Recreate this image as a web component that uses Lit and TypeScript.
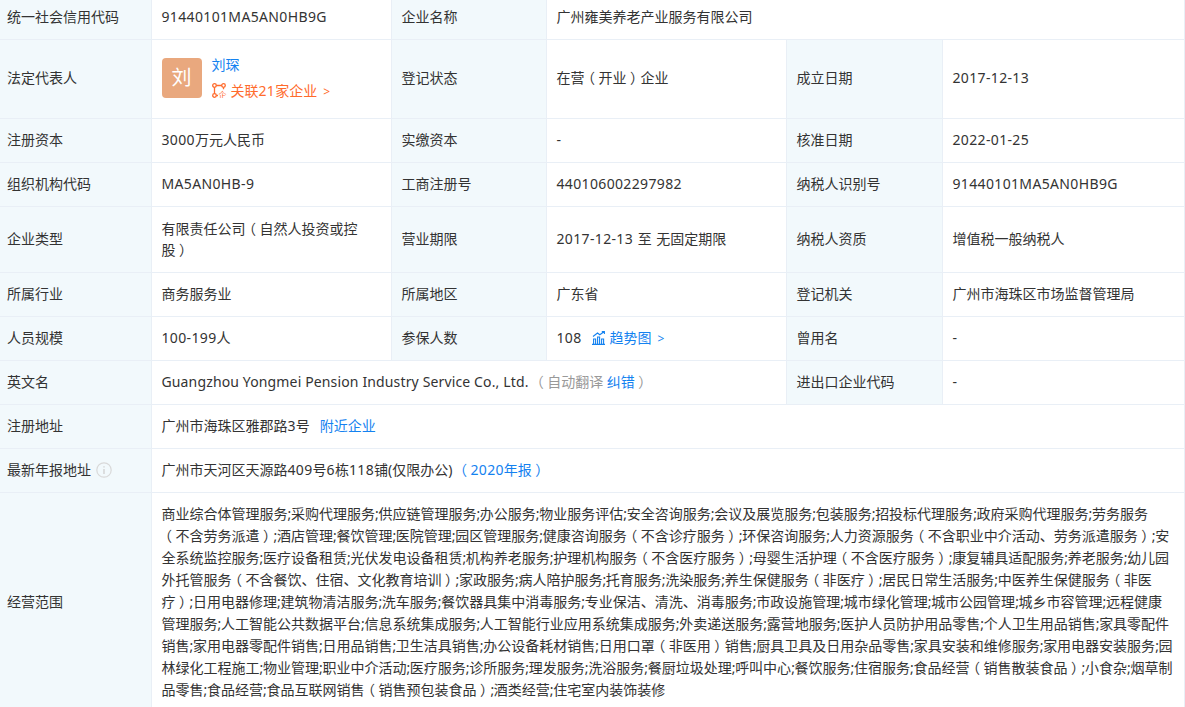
import { LitElement, html, css } from "lit";
import { customElement } from "lit/decorators.js";

const SCOPE = "商业综合体管理服务;采购代理服务;供应链管理服务;办公服务;物业服务评估;安全咨询服务;会议及展览服务;包装服务;招投标代理服务;政府采购代理服务;劳务服务（不含劳务派遣）;酒店管理;餐饮管理;医院管理;园区管理服务;健康咨询服务（不含诊疗服务）;环保咨询服务;人力资源服务（不含职业中介活动、劳务派遣服务）;安全系统监控服务;医疗设备租赁;光伏发电设备租赁;机构养老服务;护理机构服务（不含医疗服务）;母婴生活护理（不含医疗服务）;康复辅具适配服务;养老服务;幼儿园外托管服务（不含餐饮、住宿、文化教育培训）;家政服务;病人陪护服务;托育服务;洗染服务;养生保健服务（非医疗）;居民日常生活服务;中医养生保健服务（非医疗）;日用电器修理;建筑物清洁服务;洗车服务;餐饮器具集中消毒服务;专业保洁、清洗、消毒服务;市政设施管理;城市绿化管理;城市公园管理;城乡市容管理;远程健康管理服务;人工智能公共数据平台;信息系统集成服务;人工智能行业应用系统集成服务;外卖递送服务;露营地服务;医护人员防护用品零售;个人卫生用品销售;家具零配件销售;家用电器零配件销售;日用品销售;卫生洁具销售;办公设备耗材销售;日用口罩（非医用）销售;厨具卫具及日用杂品零售;家具安装和维修服务;家用电器安装服务;园林绿化工程施工;物业管理;职业中介活动;医疗服务;诊所服务;理发服务;洗浴服务;餐厨垃圾处理;呼叫中心;餐饮服务;住宿服务;食品经营（销售散装食品）;小食杂;烟草制品零售;食品经营;食品互联网销售（销售预包装食品）;酒类经营;住宅室内装饰装修";

const isLatin = (s: string) => /^[A-Za-z0-9-]+$/.test(s);
const run = (s: string) => (isLatin(s) ? html`<span class="n">${s}</span>` : s);

/* Wraps full-width parens (kept glued to their neighbour character), semicolons and Latin/digit runs. */
const t = (text: string) =>
  text.split(/(（.?|.?）|;|[A-Za-z0-9-]+)/).filter(Boolean).map((part) => {
    if (part === ";") return html`<span class="s">;</span>`;
    if (part.startsWith("（")) {
      return html`<span class="g"><span class="p">（</span>${run(part.slice(1))}</span>`;
    }
    if (part.endsWith("）")) {
      return html`<span class="g">${run(part.slice(0, -1))}<span class="p">）</span></span>`;
    }
    return run(part);
  });

@customElement("app-root")
export class AppRoot extends LitElement {
  static styles = css`
    :host {
      display: block;
      height: 707px;
      overflow: hidden;
      background: #fff;
      font-family: "Noto Sans", "Noto Sans CJK SC", sans-serif;
      font-size: 14px;
      color: #333;
    }
    table {
      width: 1184px;
      margin-top: -5px;
      border-collapse: collapse;
      table-layout: fixed;
      text-spacing-trim: space-all;
    }
    .c1 { width: 151px; }
    .c2 { width: 240px; }
    .c3 { width: 155px; }
    .c4 { width: 240px; }
    .c5 { width: 156px; }
    .c6 { width: 242px; }
    td {
      border: 1px solid #e9eff6;
      padding: 10px 10px 12px;
      line-height: 21px;
      vertical-align: middle;
      word-break: break-all;
    }
    td.k { background: #f2f9fc; }
    tr > td:first-child { border-left: 0; padding-left: 7px; }
    .h44 { height: 21px; }
    .legal-row td { padding-bottom: 14px; }
    .legal { height: 54px; }
    .type { height: 43px; }
    .scope { line-height: 22px; padding: 10px 8px 10px 10px; }
    .n { letter-spacing: 0.35px; }
    .s { letter-spacing: -0.3px; }
    .en { letter-spacing: 0.14px; margin-right: 1px; }
    .wide { word-spacing: 1px; }
    .g { white-space: nowrap; }
    .p {
      font-feature-settings: "halt";
      padding: 0 3.5px;
    }
    a { color: #1482f0; }
    .grey { color: #999; }
    .person { display: flex; align-items: center; gap: 10px; margin-top: 1px; }
    .avatar {
      width: 40px; height: 40px; border-radius: 4px;
      background: #e9a87e; color: #fff; font-size: 20px;
      display: flex; align-items: center; justify-content: center;
    }
    .person-info { display: flex; flex-direction: column; gap: 5px; }
    .rel { color: #ff6b2c; display: flex; align-items: center; gap: 4px; }
    .trend { vertical-align: -2px; margin: 0 5px 0 10px; }
    .info { vertical-align: -3px; margin-left: 5px; }
    .arrow { margin-left: 6px; font-size: 12px; line-height: 0; }
    .near { margin-left: 10px; }
    .year { margin-left: 4px; }
    .mini { font-size: 8px; fill: #ff6b2c; stroke: none; }
  `;

  render() {
    return html`
      <table>
        <colgroup>
          <col class="c1" /><col class="c2" /><col class="c3" />
          <col class="c4" /><col class="c5" /><col class="c6" />
        </colgroup>
        <tr>
          <td class="k h44">统一社会信用代码</td>
          <td>${t("91440101MA5AN0HB9G")}</td>
          <td class="k">企业名称</td>
          <td colspan="3">广州雍美养老产业服务有限公司</td>
        </tr>
        <tr class="legal-row">
          <td class="k legal">法定代表人</td>
          <td>
            <div class="person">
              <div class="avatar">刘</div>
              <div class="person-info">
                <a>刘琛</a>
                <div class="rel">
                  <svg width="15" height="15" viewBox="0 0 15 15" fill="none" stroke="#ff6b2c" stroke-width="1.3">
                    <circle cx="2.5" cy="2.5" r="1.8" /><circle cx="11.5" cy="2.5" r="1.8" /><circle cx="2.5" cy="12.5" r="1.8" />
                    <path d="M4.3 2.5h5.4M2.5 4.3v6.4M11.5 4.3v2M4.3 12.5h1.7" />
                    <text class="mini" x="6.5" y="14.5">企</text>
                  </svg>
                  <span>关联${t("21")}家企业<span class="arrow">&gt;</span></span>
                </div>
              </div>
            </div>
          </td>
          <td class="k">登记状态</td>
          <td>${t("在营（开业）企业")}</td>
          <td class="k">成立日期</td>
          <td>${t("2017-12-13")}</td>
        </tr>
        <tr>
          <td class="k h44">注册资本</td><td>${t("3000万元人民币")}</td>
          <td class="k">实缴资本</td><td>-</td>
          <td class="k">核准日期</td><td>${t("2022-01-25")}</td>
        </tr>
        <tr>
          <td class="k h44">组织机构代码</td><td>${t("MA5AN0HB-9")}</td>
          <td class="k">工商注册号</td><td>${t("440106002297982")}</td>
          <td class="k">纳税人识别号</td><td>${t("91440101MA5AN0HB9G")}</td>
        </tr>
        <tr>
          <td class="k type">企业类型</td><td>${t("有限责任公司（自然人投资或控股）")}</td>
          <td class="k">营业期限</td><td class="wide">${t("2017-12-13")} 至 无固定期限</td>
          <td class="k">纳税人资质</td><td>增值税一般纳税人</td>
        </tr>
        <tr>
          <td class="k h44">所属行业</td><td>商务服务业</td>
          <td class="k">所属地区</td><td>广东省</td>
          <td class="k">登记机关</td><td>广州市海珠区市场监督管理局</td>
        </tr>
        <tr>
          <td class="k h44">人员规模</td><td>${t("100-199人")}</td>
          <td class="k">参保人数</td>
          <td>${t("108")}<svg class="trend" width="13" height="14" viewBox="0 0 13 14" fill="none" stroke="#1482f0" stroke-width="1.1">
              <path d="M0 13.4h13M1.6 13V8h2v5M5.6 13V6h2v7M9.6 13V8h2v5M1 5.5 5.5 2l2.3 1.8L12 .8M9.8.6h2.6V3" />
            </svg><a>趋势图<span class="arrow">&gt;</span></a></td>
          <td class="k">曾用名</td><td>-</td>
        </tr>
        <tr>
          <td class="k h44">英文名</td>
          <td colspan="3"><span class="en">Guangzhou Yongmei Pension Industry Service Co., Ltd.</span> <span class="grey">${t("（自动翻译 ")}<a>纠错</a>${t("）")}</span></td>
          <td class="k">进出口企业代码</td><td>-</td>
        </tr>
        <tr>
          <td class="k h44">注册地址</td>
          <td colspan="5">${t("广州市海珠区雅郡路3号")}<a class="near">附近企业</a></td>
        </tr>
        <tr>
          <td class="k h44">最新年报地址<svg class="info" width="16" height="16" viewBox="0 0 16 16" fill="none">
              <circle cx="8" cy="8" r="7.2" stroke="#d9d9d9" stroke-width="1.2" />
              <path d="M8 4.2v1.4M8 7v5" stroke="#cfcfcf" stroke-width="1.3" />
            </svg></td>
          <td colspan="5">${t("广州市天河区天源路409号6栋118铺")}(仅限办公)<a class="year">${t("（2020年报）")}</a></td>
        </tr>
        <tr>
          <td class="k">经营范围</td>
          <td colspan="5" class="scope">${t(SCOPE)}</td>
        </tr>
      </table>
    `;
  }
}
